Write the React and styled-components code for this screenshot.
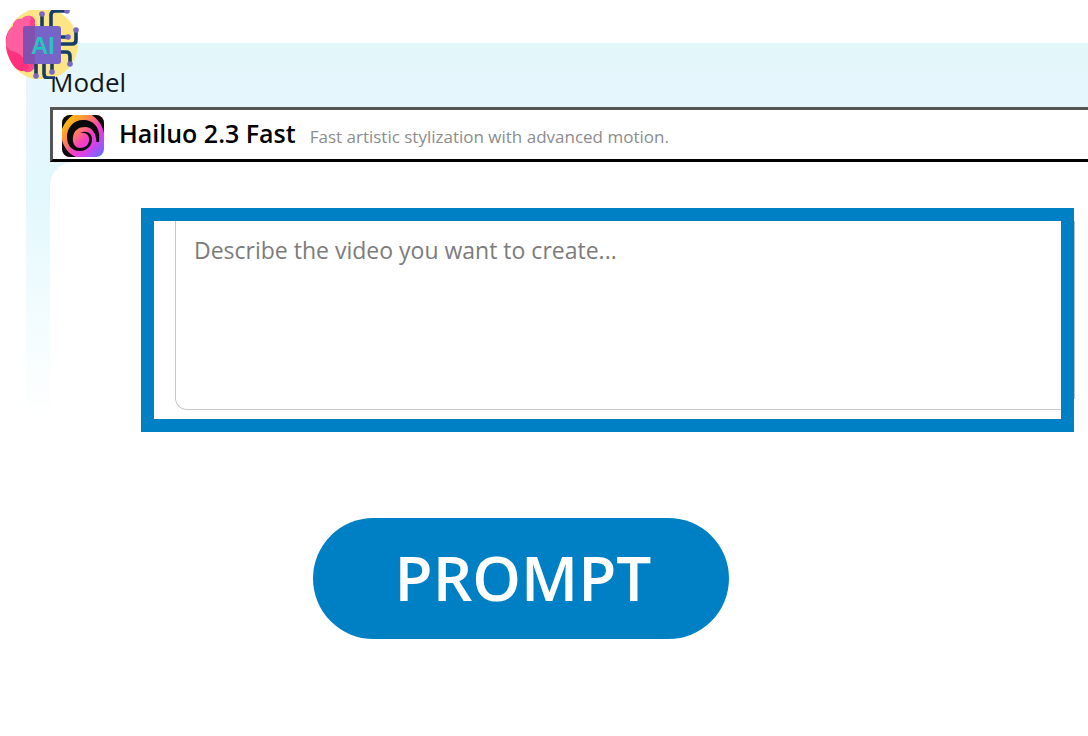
import React, { useState } from "react";
import styled, { createGlobalStyle } from "styled-components";

const GlobalStyle = createGlobalStyle`
  * {
    box-sizing: border-box;
  }
  body {
    margin: 0;
    background: #fff;
    font-family: "Open Sans", "Noto Sans", sans-serif;
    overflow-x: hidden;
  }
`;

const Page = styled.main`
  position: relative;
  padding: 43px 0 96px 26px;
`;

const Badge = styled.svg`
  position: absolute;
  top: 8px;
  left: 4px;
  width: 76px;
  height: 72px;
`;

const Panel = styled.section`
  padding: 20px 0 0 24px;
  background: linear-gradient(
    to bottom,
    #e2f7f8 0px,
    #e6f6fd 44px,
    #e2f8fc 150px,
    #f2fcfe 270px,
    #fff 376px
  );
`;

const FieldLabel = styled.div`
  height: 44px;
  font-size: 26px;
  line-height: 38px;
  color: #111820;
`;

const ModelButton = styled.button`
  display: flex;
  align-items: center;
  width: 100%;
  height: 55px;
  padding: 0 8px;
  border: 3px solid #000;
  border-top-color: #555;
  border-left-color: #555;
  border-right: 0;
  background: #fff;
  font-family: inherit;
  text-align: left;
  cursor: pointer;
`;

const ModelLogo = styled.svg`
  flex: none;
  width: 44px;
  height: 44px;
  margin-right: 14px;
`;

const ModelText = styled.span`
  display: flex;
  align-items: baseline;
  height: 40px;
  line-height: 36px;
  white-space: nowrap;
`;

const ModelName = styled.span`
  margin-right: 14px;
  font-size: 25px;
  font-weight: 600;
  color: #000;
`;

const ModelInfo = styled.span`
  font-size: 17px;
  color: #8c8c8c;
`;

const Card = styled.div`
  padding: 46px 14px 0 91px;
  border-top-left-radius: 24px;
  background: #fff;
`;

const Highlight = styled.div`
  position: relative;
  border: 13px solid #0080c4;
  height: 224px;
  padding-left: 21px;

  /* far edge of the text box, showing past the frame */
  &::after {
    content: "";
    position: absolute;
    top: 0;
    right: -14px;
    width: 1px;
    height: 178px;
    background: #b4c4cc;
  }
`;

const PromptInput = styled.textarea`
  display: block;
  width: 100%;
  height: 189px;
  padding: 12px 18px;
  border: 1px solid #c8c8c8;
  border-top: 0;
  border-right: 0;
  border-bottom-left-radius: 12px;
  outline: none;
  resize: none;
  background: #fff;
  color: #222;
  font-family: inherit;
  font-size: 23px;
  line-height: 34px;

  &::placeholder {
    color: #7c7c7c;
    opacity: 1;
  }
`;

const PromptButton = styled.button`
  display: block;
  width: 416px;
  height: 121px;
  margin: 86px 0 0 287px;
  padding: 0 0 4px 4px;
  border: 0;
  border-radius: 61px;
  background: #0080c4;
  color: #fff;
  font-family: inherit;
  font-size: 62px;
  font-weight: 600;
  cursor: pointer;
`;

function BrainBadge() {
  return (
    <Badge viewBox="4 8 76 72" aria-hidden="true">
      <defs>
        <clipPath id="disc">
          <path d="M4 10h76v69H4z" />
        </clipPath>
      </defs>
      <g clipPath="url(#disc)">
        <circle cx="42" cy="44" r="36" fill="#fde485" />
        <path
          d="M35 20c-2-5-9-6-13-1-5-1-9 3-9 7-6 5-8 11-7 18 0 8 2 13 6 16 1 7 7 12 12 11 4 3 10 0 11-5z"
          fill="#ff4389"
        />
        <path
          d="M31 16c-4-1-8 1-9 3-5-1-9 3-9 7-6 5-8 14-6 24 6 4 13 5 17 10z"
          fill="#ff67a4"
          opacity=".8"
        />
        <path
          d="M7 46c3 8 10 3 16 12l6 8c-2 5-8 6-12 3-5-3-10-13-10-23z"
          fill="#ff317e"
        />
        <g fill="none" stroke="#173e68" strokeWidth="3.6">
          <path d="M42 27V14M51 27V15q0-4 4-4h11M61 37h6M61 44h11q4 0 4-4V31" />
          <path d="M61 52h5q4 0 4 4v8M36 63v13M44 63v11q0 4 4 4h7M52 63v9" />
        </g>
        <g fill="#7667c9">
          <circle cx="42" cy="14" r="2.8" />
          <circle cx="67" cy="11" r="2.8" />
          <circle cx="68" cy="37" r="2.8" />
          <circle cx="76" cy="30" r="2.8" />
          <circle cx="70" cy="64" r="2.8" />
          <circle cx="36" cy="76" r="2.8" />
          <circle cx="52" cy="72" r="2.8" />
        </g>
      </g>
      <rect x="23" y="26" width="38" height="38" rx="3" fill="#7764c8" />
      <path d="M26 26h9v38h-9q-3 0-3-3V29q0-3 3-3z" fill="#8450ae" />
      <text
        x="31"
        y="54"
        fill="#25c5bd"
        fontFamily="Liberation Sans, sans-serif"
        fontSize="24"
        fontWeight="700"
      >
        AI
      </text>
    </Badge>
  );
}

function SpiralLogo() {
  return (
    <ModelLogo viewBox="0 0 44 44" aria-hidden="true">
      <defs>
        <linearGradient id="swirl" x1="0" y1="0" x2="1" y2="1">
          <stop offset=".1" stopColor="#ffc400" />
          <stop offset=".34" stopColor="#ff8a48" />
          <stop offset=".58" stopColor="#f83cc4" />
          <stop offset=".74" stopColor="#d142ec" />
          <stop offset=".94" stopColor="#6a6df8" />
        </linearGradient>
        <clipPath id="tile">
          <rect x="1" y="2" width="42" height="42" rx="8" />
        </clipPath>
      </defs>
      <g clipPath="url(#tile)">
        <rect x="1" y="1" width="42" height="43" fill="url(#swirl)" />
        <path d="M1 1h13C8 4 4 9 1 16z" fill="#0b0a0c" />
        <path d="M29 1h14v19C41 11 36 5 29 1z" fill="#0b0a0c" />
        <path d="M1 27c2 8 7 14 14 17H1z" fill="#0b0a0c" />
        <path
          d="M38 29C40 15 33 7 22 7 12 7 6 15 6 24c0 9 6 15 14 14 7-1 11-6 11-12 0-6-6-9-12-6 6-1 9.500 2 9 7 0 5-4 8-9 8-5 0-8-5-7-11 1-7 6-10 12-10 7 0 11 6 11.500 15z"
          fill="#0b0a0c"
        />
      </g>
    </ModelLogo>
  );
}

export default function App() {
  const [prompt, setPrompt] = useState("");

  return (
    <>
      <GlobalStyle />
      <Page>
        <Panel>
          <FieldLabel id="model-label">Model</FieldLabel>
          <ModelButton type="button" aria-describedby="model-label">
            <SpiralLogo />
            <ModelText>
              <ModelName>Hailuo 2.3 Fast</ModelName>
              <ModelInfo>
                Fast artistic stylization with advanced motion.
              </ModelInfo>
            </ModelText>
          </ModelButton>
          <Card>
            <Highlight>
              <PromptInput
                aria-label="Prompt"
                placeholder="Describe the video you want to create..."
                value={prompt}
                onChange={(e) => setPrompt(e.target.value)}
              />
            </Highlight>
          </Card>
        </Panel>
        <PromptButton type="button">PROMPT</PromptButton>
        <BrainBadge />
      </Page>
    </>
  );
}
